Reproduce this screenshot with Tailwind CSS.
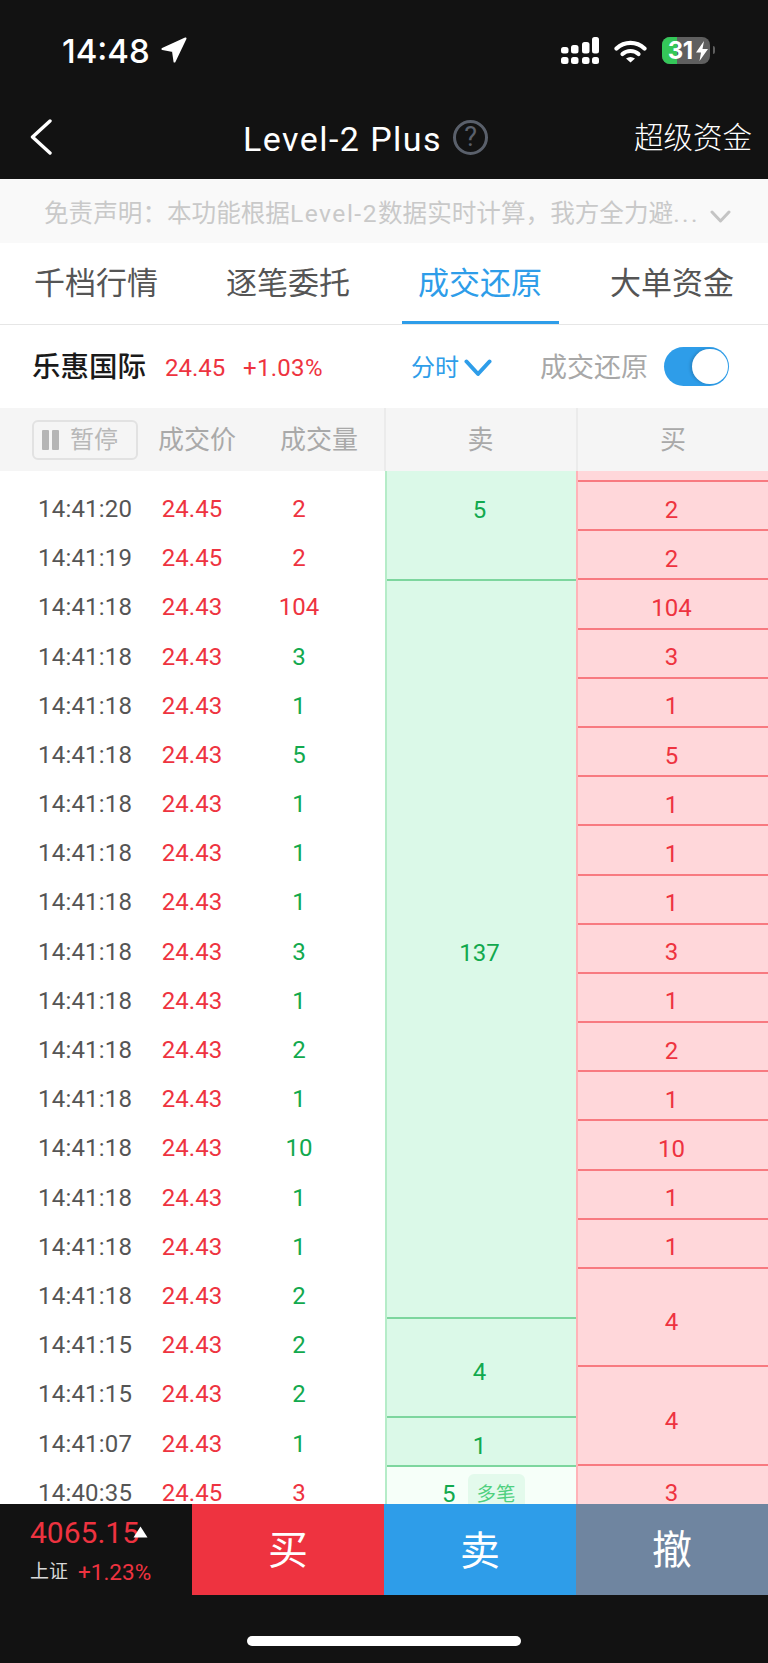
<!DOCTYPE html>
<html lang="zh">
<head>
<meta charset="utf-8">
<script src="https://cdn.jsdelivr.net/npm/@tailwindcss/browser@4"></script>
</head>
<body class="bg-[#121212]">
<div class="w-[768px] h-[1663px] overflow-hidden bg-white font-['Roboto','Noto_Sans_CJK_SC',sans-serif]">

  <!-- status + nav -->
  <header class="h-[179px] bg-[#121212] text-white">
    <div class="h-[100px] flex items-start pt-[35px] pl-[62px]">
      <span class="font-['Inter'] font-medium text-[33px] leading-[32px]">14:48</span>
      <svg class="ml-[11px] mt-[2px]" width="26" height="26" viewBox="0 0 26 26"><path d="M24.5 1.5L1.5 12L12 14L13.5 24.5Z" fill="#fff" stroke="#fff" stroke-width="2" stroke-linejoin="round"/></svg>
      <svg class="ml-[374px] mt-[2px]" width="38" height="27" viewBox="0 0 38 27" fill="#fff">
        <rect x="0" y="10" width="7.5" height="6.5" rx="2.5"/><rect x="10" y="8" width="7.5" height="8.5" rx="2.5"/><rect x="21" y="5" width="7.5" height="11.5" rx="2.5"/><rect x="31" y="0" width="7" height="16.5" rx="2.5"/>
        <rect x="0" y="20" width="7.5" height="7" rx="2.5"/><rect x="10" y="20" width="7.5" height="7" rx="2.5"/><rect x="21" y="20" width="7.5" height="7" rx="2.5"/><rect x="31" y="20" width="7" height="7" rx="2.5"/>
      </svg>
      <svg class="ml-[15px] mt-[5px]" width="33" height="23" viewBox="0 0 33 23" fill="none" stroke="#fff" stroke-width="4.2" stroke-linecap="round">
        <path d="M2.5 8.5C10.5 1 22.5 1 30.5 8.5"/><path d="M8.5 14C13 10 20 10 24.5 14"/><path d="M16.5 22.5L12 18.5Q16.5 15.5 21 18.5Z" fill="#fff" stroke="none"/>
      </svg>
      <div class="relative ml-[15px] mt-[2px] w-[48px] h-[27px] rounded-[8px] bg-[#5f5f5f] overflow-hidden flex">
        <div class="w-[15px] h-full bg-[#34c759]"></div>
        <span class="absolute left-[6px] top-0 font-['Inter'] font-bold text-[24px] leading-[27px] tracking-[-0.5px]">31</span>
        <svg class="absolute left-[34px] top-[4px]" width="12" height="20" viewBox="0 0 12 20"><path d="M8 0L0 11.5H5L3.5 20L12 8H6.5Z" fill="#fff"/></svg>
      </div>
      <div class="ml-[3px] mt-[11px] w-[2px] h-[8px] rounded-r bg-[#5f5f5f]"></div>
    </div>
    <div class="h-[74px] flex items-center pl-[30px]">
      <svg width="22" height="36" viewBox="0 0 22 36" fill="none" stroke="#fff" stroke-width="3.4" stroke-linecap="round" stroke-linejoin="round"><path d="M20 2L2.5 18L20 34"/></svg>
      <span class="ml-[191px] mt-[3px] text-[34px] leading-[40px] tracking-[1.45px] whitespace-nowrap">Level-2 Plus</span>
      <div class="ml-[11px] w-[35px] h-[35px] rounded-full border-[3px] border-[#5a606b] text-[#5a606b] flex items-center justify-center text-[27px] leading-none">?</div>
      <span class="ml-auto pr-[16px] mt-[1px] text-[29.5px] leading-[40px] font-light whitespace-nowrap">超级资金</span>
    </div>
  </header>

  <!-- disclaimer -->
  <div class="h-[64px] bg-[#f9f9f9] flex items-center pl-[44px] text-[#c9c9c9]">
    <span class="mt-[6px] text-[24.6px] leading-[32px] whitespace-nowrap">免责声明：本功能根据<span class="tracking-[1.5px]">Level-2</span>数据实时计算，我方全力避<span class="tracking-[2.5px]">...</span></span>
    <svg class="ml-auto mr-[37px] mt-[10px]" width="21" height="13" viewBox="0 0 21 13" fill="none" stroke="#c4c4c4" stroke-width="3" stroke-linecap="round" stroke-linejoin="round"><path d="M2 2L10.5 11L19 2"/></svg>
  </div>

  <!-- tabs -->
  <nav class="h-[82px] border-b border-[#e6e6e6] flex text-[31px] leading-[40px] text-[#555555]">
    <div class="w-[192px] flex items-center justify-center">千档行情</div>
    <div class="w-[192px] flex items-center justify-center">逐笔委托</div>
    <div class="relative w-[192px] flex items-center justify-center text-[#2e9de9]">成交还原<div class="absolute left-[18px] bottom-0 w-[157px] h-[3px] bg-[#2e9de9]"></div></div>
    <div class="w-[192px] flex items-center justify-center">大单资金</div>
  </nav>

  <!-- stock info -->
  <div class="h-[83px] flex items-center pl-[32px] pt-[2px]">
    <span class="w-[133px] text-[28.5px] leading-[40px] font-medium text-[#1a1a1a] whitespace-nowrap">乐惠国际</span>
    <span class="w-[78px] text-[24px] leading-[32px] text-[#ee3340]">24.45</span>
    <span class="w-[168px] text-[24px] leading-[32px] tracking-[0.3px] text-[#ee3340]">+1.03%</span>
    <span class="text-[24px] leading-[32px] text-[#2e9de9] whitespace-nowrap">分时</span>
    <svg class="ml-[5px]" width="28" height="18" viewBox="0 0 28 18" fill="none" stroke="#2e9de9" stroke-width="4" stroke-linecap="round" stroke-linejoin="round"><path d="M2.5 2.5L14 15L25.5 2.5"/></svg>
    <span class="ml-[48px] text-[27px] leading-[32px] text-[#a8a8a8] whitespace-nowrap">成交还原</span>
    <div class="ml-[16px] mt-[-2px] w-[65px] h-[39px] rounded-full bg-[#2e9de9] flex items-center justify-end pr-[1px]">
      <div class="w-[36px] h-[35px] rounded-full bg-white shadow-[-2px_0_3px_rgba(0,0,0,0.15)]"></div>
    </div>
  </div>

  <!-- table header -->
  <div class="h-[63px] bg-[#f5f5f5] flex text-[#a9a9a9]">
    <div class="w-[386px] border-r-2 border-[#ebebeb] flex items-center pl-[32px] pt-[1px] text-[26px] leading-[32px]">
      <div class="w-[106px] h-[40px] mt-[-1px] border-2 border-[#e2e2e2] rounded-[6px] flex items-center pl-[8px] text-[24px] text-[#b8b8b8]">
        <div class="w-[7px] h-[20px] rounded-[1px] bg-[#b5b5b5]"></div>
        <div class="ml-[3px] w-[7px] h-[20px] rounded-[1px] bg-[#b5b5b5]"></div>
        <span class="ml-[11px] whitespace-nowrap">暂停</span>
      </div>
      <span class="ml-[20px] whitespace-nowrap">成交价</span>
      <span class="ml-[44px] whitespace-nowrap">成交量</span>
    </div>
    <div class="w-[192px] border-r-2 border-[#ebebeb] flex items-center justify-center text-[26px] pr-[1px] pt-[2px]">卖</div>
    <div class="w-[190px] flex items-center justify-center text-[26px] pt-[2px]">买</div>
  </div>

  <!-- table body -->
  <div class="h-[1033px] overflow-hidden flex">
    <div class="w-[385px] pt-[13.4px] text-[24px] leading-[20px]">
      <div class="h-[49.2px] flex items-center"><span class="w-[145px] pl-[38px] tracking-[0.2px] text-[#555555]">14:41:20</span><span class="w-[94px] text-center text-[#ee3340]">24.45</span><span class="w-[120px] text-center text-[#ee3340]">2</span></div>
      <div class="h-[49.2px] flex items-center"><span class="w-[145px] pl-[38px] tracking-[0.2px] text-[#555555]">14:41:19</span><span class="w-[94px] text-center text-[#ee3340]">24.45</span><span class="w-[120px] text-center text-[#ee3340]">2</span></div>
      <div class="h-[49.2px] flex items-center"><span class="w-[145px] pl-[38px] tracking-[0.2px] text-[#555555]">14:41:18</span><span class="w-[94px] text-center text-[#ee3340]">24.43</span><span class="w-[120px] text-center text-[#ee3340]">104</span></div>
      <div class="h-[49.2px] flex items-center"><span class="w-[145px] pl-[38px] tracking-[0.2px] text-[#555555]">14:41:18</span><span class="w-[94px] text-center text-[#ee3340]">24.43</span><span class="w-[120px] text-center text-[#12a94e]">3</span></div>
      <div class="h-[49.2px] flex items-center"><span class="w-[145px] pl-[38px] tracking-[0.2px] text-[#555555]">14:41:18</span><span class="w-[94px] text-center text-[#ee3340]">24.43</span><span class="w-[120px] text-center text-[#12a94e]">1</span></div>
      <div class="h-[49.2px] flex items-center"><span class="w-[145px] pl-[38px] tracking-[0.2px] text-[#555555]">14:41:18</span><span class="w-[94px] text-center text-[#ee3340]">24.43</span><span class="w-[120px] text-center text-[#12a94e]">5</span></div>
      <div class="h-[49.2px] flex items-center"><span class="w-[145px] pl-[38px] tracking-[0.2px] text-[#555555]">14:41:18</span><span class="w-[94px] text-center text-[#ee3340]">24.43</span><span class="w-[120px] text-center text-[#12a94e]">1</span></div>
      <div class="h-[49.2px] flex items-center"><span class="w-[145px] pl-[38px] tracking-[0.2px] text-[#555555]">14:41:18</span><span class="w-[94px] text-center text-[#ee3340]">24.43</span><span class="w-[120px] text-center text-[#12a94e]">1</span></div>
      <div class="h-[49.2px] flex items-center"><span class="w-[145px] pl-[38px] tracking-[0.2px] text-[#555555]">14:41:18</span><span class="w-[94px] text-center text-[#ee3340]">24.43</span><span class="w-[120px] text-center text-[#12a94e]">1</span></div>
      <div class="h-[49.2px] flex items-center"><span class="w-[145px] pl-[38px] tracking-[0.2px] text-[#555555]">14:41:18</span><span class="w-[94px] text-center text-[#ee3340]">24.43</span><span class="w-[120px] text-center text-[#12a94e]">3</span></div>
      <div class="h-[49.2px] flex items-center"><span class="w-[145px] pl-[38px] tracking-[0.2px] text-[#555555]">14:41:18</span><span class="w-[94px] text-center text-[#ee3340]">24.43</span><span class="w-[120px] text-center text-[#12a94e]">1</span></div>
      <div class="h-[49.2px] flex items-center"><span class="w-[145px] pl-[38px] tracking-[0.2px] text-[#555555]">14:41:18</span><span class="w-[94px] text-center text-[#ee3340]">24.43</span><span class="w-[120px] text-center text-[#12a94e]">2</span></div>
      <div class="h-[49.2px] flex items-center"><span class="w-[145px] pl-[38px] tracking-[0.2px] text-[#555555]">14:41:18</span><span class="w-[94px] text-center text-[#ee3340]">24.43</span><span class="w-[120px] text-center text-[#12a94e]">1</span></div>
      <div class="h-[49.2px] flex items-center"><span class="w-[145px] pl-[38px] tracking-[0.2px] text-[#555555]">14:41:18</span><span class="w-[94px] text-center text-[#ee3340]">24.43</span><span class="w-[120px] text-center text-[#12a94e]">10</span></div>
      <div class="h-[49.2px] flex items-center"><span class="w-[145px] pl-[38px] tracking-[0.2px] text-[#555555]">14:41:18</span><span class="w-[94px] text-center text-[#ee3340]">24.43</span><span class="w-[120px] text-center text-[#12a94e]">1</span></div>
      <div class="h-[49.2px] flex items-center"><span class="w-[145px] pl-[38px] tracking-[0.2px] text-[#555555]">14:41:18</span><span class="w-[94px] text-center text-[#ee3340]">24.43</span><span class="w-[120px] text-center text-[#12a94e]">1</span></div>
      <div class="h-[49.2px] flex items-center"><span class="w-[145px] pl-[38px] tracking-[0.2px] text-[#555555]">14:41:18</span><span class="w-[94px] text-center text-[#ee3340]">24.43</span><span class="w-[120px] text-center text-[#12a94e]">2</span></div>
      <div class="h-[49.2px] flex items-center"><span class="w-[145px] pl-[38px] tracking-[0.2px] text-[#555555]">14:41:15</span><span class="w-[94px] text-center text-[#ee3340]">24.43</span><span class="w-[120px] text-center text-[#12a94e]">2</span></div>
      <div class="h-[49.2px] flex items-center"><span class="w-[145px] pl-[38px] tracking-[0.2px] text-[#555555]">14:41:15</span><span class="w-[94px] text-center text-[#ee3340]">24.43</span><span class="w-[120px] text-center text-[#12a94e]">2</span></div>
      <div class="h-[49.2px] flex items-center"><span class="w-[145px] pl-[38px] tracking-[0.2px] text-[#555555]">14:41:07</span><span class="w-[94px] text-center text-[#ee3340]">24.43</span><span class="w-[120px] text-center text-[#12a94e]">1</span></div>
      <div class="h-[49.2px] flex items-center"><span class="w-[145px] pl-[38px] tracking-[0.2px] text-[#555555]">14:40:35</span><span class="w-[94px] text-center text-[#ee3340]">24.45</span><span class="w-[120px] text-center text-[#ee3340]">3</span></div>
    </div>

    <!-- sell column -->
    <div class="w-[191px] border-l-2 border-[#b5ecc8] text-[24px] leading-[20px] text-[#12a94e] bg-[#f6fff9]">
      <div class="h-[110px] bg-[#dbf9e8] border-b-2 border-[#7dd69e] flex justify-center pt-[29px] pr-[4px]">5</div>
      <div class="h-[738px] bg-[#dbf9e8] border-b-2 border-[#7dd69e] flex items-center justify-center pt-[8px] pr-[4px]">137</div>
      <div class="h-[98.7px] bg-[#dbf9e8] border-b-2 border-[#7dd69e] flex items-center justify-center pt-[10px] pr-[4px]">4</div>
      <div class="h-[49px] bg-[#dbf9e8] border-b-2 border-[#7dd69e] flex items-center justify-center pt-[10px] pr-[4px]">1</div>
      <div class="h-[37px] flex items-start pt-[17px] pl-[55px]">
        <span>5</span>
        <span class="ml-[12px] mt-[-10px] w-[57px] h-[30px] pt-[11px] rounded-t-[6px] bg-[#e3faec] text-[#4fd07f] text-[19.5px] leading-[19px] text-center">多笔</span>
      </div>
    </div>

    <!-- buy column -->
    <div class="w-[192px] border-l-2 border-[#ffb3b8] bg-[#ffd7da] text-[24px] leading-[20px] text-[#ee3340]">
      <div class="h-[11px] border-b-2 border-[#f87a80]"></div>
      <div class="h-[49.2px] border-b-2 border-[#f87a80] flex items-center justify-center pt-[8px] pr-[3px]">2</div>
      <div class="h-[49.2px] border-b-2 border-[#f87a80] flex items-center justify-center pt-[8px] pr-[3px]">2</div>
      <div class="h-[49.2px] border-b-2 border-[#f87a80] flex items-center justify-center pt-[8px] pr-[3px]">104</div>
      <div class="h-[49.2px] border-b-2 border-[#f87a80] flex items-center justify-center pt-[8px] pr-[3px]">3</div>
      <div class="h-[49.2px] border-b-2 border-[#f87a80] flex items-center justify-center pt-[8px] pr-[3px]">1</div>
      <div class="h-[49.2px] border-b-2 border-[#f87a80] flex items-center justify-center pt-[8px] pr-[3px]">5</div>
      <div class="h-[49.2px] border-b-2 border-[#f87a80] flex items-center justify-center pt-[8px] pr-[3px]">1</div>
      <div class="h-[49.2px] border-b-2 border-[#f87a80] flex items-center justify-center pt-[8px] pr-[3px]">1</div>
      <div class="h-[49.2px] border-b-2 border-[#f87a80] flex items-center justify-center pt-[8px] pr-[3px]">1</div>
      <div class="h-[49.2px] border-b-2 border-[#f87a80] flex items-center justify-center pt-[8px] pr-[3px]">3</div>
      <div class="h-[49.2px] border-b-2 border-[#f87a80] flex items-center justify-center pt-[8px] pr-[3px]">1</div>
      <div class="h-[49.2px] border-b-2 border-[#f87a80] flex items-center justify-center pt-[8px] pr-[3px]">2</div>
      <div class="h-[49.2px] border-b-2 border-[#f87a80] flex items-center justify-center pt-[8px] pr-[3px]">1</div>
      <div class="h-[49.2px] border-b-2 border-[#f87a80] flex items-center justify-center pt-[8px] pr-[3px]">10</div>
      <div class="h-[49.2px] border-b-2 border-[#f87a80] flex items-center justify-center pt-[8px] pr-[3px]">1</div>
      <div class="h-[49.2px] border-b-2 border-[#f87a80] flex items-center justify-center pt-[8px] pr-[3px]">1</div>
      <div class="h-[98.4px] border-b-2 border-[#f87a80] flex items-center justify-center pt-[10px] pr-[3px]">4</div>
      <div class="h-[98.4px] border-b-2 border-[#f87a80] flex items-center justify-center pt-[10px] pr-[3px]">4</div>
      <div class="h-[37px] flex justify-center pt-[17px] pr-[3px]">3</div>
    </div>
  </div>

  <!-- footer -->
  <footer class="h-[159px] bg-[#121212]">
    <div class="h-[91px] flex">
      <div class="w-[192px] pl-[30px] pt-[11px]">
        <div class="relative h-[36px] text-[30px] leading-[36px] text-[#ee3340]">4065.15
          <svg class="absolute left-[103px] top-[11px]" width="15" height="12" viewBox="0 0 15 12"><path d="M7.5 0.5L14.5 11.5H0.5Z" fill="#fff"/></svg>
        </div>
        <div class="mt-[7px] flex items-center leading-[28px]">
          <span class="text-[19px] text-[#d8d8d8]">上证</span>
          <span class="ml-[10px] text-[22.5px] text-[#ee3340]">+1.23%</span>
        </div>
      </div>
      <div class="w-[192px] bg-[#ee3340] flex items-center justify-center text-[40px] text-white pt-[2px]">买</div>
      <div class="w-[192px] bg-[#2e9de9] flex items-center justify-center text-[40px] text-white pt-[5px]">卖</div>
      <div class="w-[192px] bg-[#6f85a0] flex items-center justify-center text-[40px] text-white pt-[2px]">撤</div>
    </div>
    <div class="pt-[41px] flex justify-center">
      <div class="w-[274px] h-[10px] rounded-full bg-white"></div>
    </div>
  </footer>
</div>
</body>
</html>
